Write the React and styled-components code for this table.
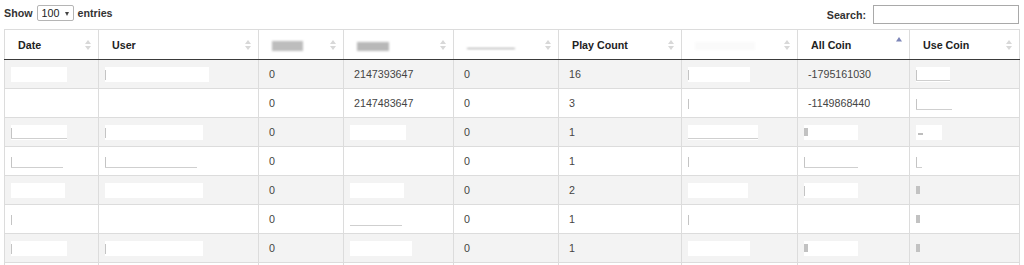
import React from "react";
import styled, { createGlobalStyle, css } from "styled-components";

const Global = createGlobalStyle`
  html, body { margin: 0; padding: 0; background: #fff; }
  body { font-family: "Liberation Sans", Arial, sans-serif; color: #333; overflow: hidden; }
`;

const Page = styled.div`
  padding: 0 5px 0 4px;
  width: 1015px;
`;

const TopBar = styled.div`
  display: flex;
  justify-content: space-between;
  align-items: flex-start;
  height: 29px;
`;

const Label = styled.label`
  display: flex;
  align-items: center;
  gap: 4px;
  font-size: 10.7px;
  font-weight: bold;
  color: #333;
`;

const LengthLabel = styled(Label)`
  margin-top: 5px;
`;

const SearchLabel = styled(Label)`
  margin-top: 5px;
  gap: 7px;
`;

const SelectWrap = styled.span`
  position: relative;
  display: inline-block;
  &::after {
    content: "";
    position: absolute;
    right: 5px;
    top: 7px;
    border-left: 2.5px solid transparent;
    border-right: 2.5px solid transparent;
    border-top: 4px solid #444;
    pointer-events: none;
  }
`;

const Select = styled.select`
  appearance: none;
  -webkit-appearance: none;
  font-family: inherit;
  font-size: 10.7px;
  color: #222;
  height: 16px;
  width: 37px;
  padding: 0 0 0 4px;
  border: 1px solid #b5b5b5;
  border-radius: 2px;
  background: #fff;
  outline: none;
`;

const SearchInput = styled.input`
  width: 146px;
  height: 19px;
  box-sizing: border-box;
  border: 1px solid #a9a9a9;
  padding: 0 4px;
  font-size: 11px;
  outline: none;
`;

const Table = styled.table`
  width: 1015px;
  table-layout: fixed;
  border-collapse: collapse;
  font-size: 10.7px;
`;

const Col = styled.col`
  width: ${(p) => p.$w}px;
`;

const Th = styled.th`
  position: relative;
  height: 30px;
  padding: 0 18px 0 13px;
  box-sizing: border-box;
  text-align: left;
  font-weight: bold;
  color: #222;
  border: 1px solid #dcdcdc;
  border-bottom: 1px solid #3a3a3a;
  white-space: nowrap;
  background: #fff;
`;

const SortIcon = styled.svg`
  position: absolute;
  right: 7px;
  top: 50%;
  transform: translateY(-50%);
`;

const Tr = styled.tr`
  background: ${(p) => (p.$odd ? "#f3f3f3" : "#fff")};
`;

const Td = styled.td`
  height: 29px;
  padding: 0 10px;
  box-sizing: border-box;
  border: 1px solid #dcdcdc;
  color: #444;
  white-space: nowrap;
  vertical-align: middle;
`;

const HeadBlur = styled.span`
  display: inline-block;
  vertical-align: middle;
  width: ${(p) => p.$w}px;
  height: ${(p) => p.$h}px;
  background: ${(p) => p.$c};
  filter: blur(0.8px);
  margin-top: ${(p) => p.$mt || 0}px;
`;

const Redact = styled.span`
  position: relative;
  display: inline-block;
  vertical-align: middle;
  margin-left: -4px;
  width: ${(p) => p.$w}px;
  height: 15px;
  background: ${(p) => (p.$box ? "#fff" : "transparent")};
  filter: blur(0.5px);
  ${(p) =>
    p.$tick &&
    css`
      &::before {
        content: "";
        position: absolute;
        left: 0;
        top: 3px;
        width: 1px;
        height: 10px;
        background: #c4c4c4;
      }
    `}
  ${(p) =>
    p.$under &&
    css`
      &::after {
        content: "";
        position: absolute;
        left: 0;
        right: 0;
        bottom: 1px;
        height: 1px;
        background: #cfcfcf;
      }
    `}
  ${(p) =>
    p.$dot &&
    css`
      &::before {
        content: "";
        position: absolute;
        left: 0;
        top: 3px;
        width: 4px;
        height: 8px;
        background: #c2c2c2;
      }
    `}
  ${(p) =>
    p.$dash &&
    css`
      &::after {
        content: "";
        position: absolute;
        left: 2px;
        top: 8px;
        width: 5px;
        height: 2px;
        background: #bdbdbd;
      }
    `}
`;

const widths = [94, 160, 85, 110, 105, 123, 116, 112, 110];

const BothArrows = () => (
  <SortIcon width="6" height="10" viewBox="0 0 6 10">
    <path d="M3 0 L6 4 L0 4 Z" fill="#d8d8d8" />
    <path d="M3 10 L6 6 L0 6 Z" fill="#d8d8d8" />
  </SortIcon>
);

const AscArrow = () => (
  <SortIcon width="6" height="10" viewBox="0 0 6 10" style={{ marginTop: -3 }}>
    <path d="M3 0 L6 4.5 L0 4.5 Z" fill="#7d86b8" />
  </SortIcon>
);

const headers = [
  { label: "Date" },
  { label: "User" },
  { blur: { w: 31, h: 10, c: "#bdbdbd" } },
  { blur: { w: 32, h: 9, c: "#b8b8b8", mt: 2 } },
  { blur: { w: 48, h: 1.5, c: "#9a9a9a", mt: 6 } },
  { label: "Play Count" },
  { blur: { w: 60, h: 8, c: "#fafafa" } },
  { label: "All Coin", asc: true },
  { label: "Use Coin" },
];

const rows = [
  [{ w: 56, box: 1 }, { w: 104, box: 1, tick: 1 }, "0", "2147393647", "0", "16", { w: 62, box: 1, tick: 1 }, "-1795161030", { w: 34, box: 1, tick: 1, under: 1 }],
  [{ w: 50 }, null, "0", "2147483647", "0", "3", { w: 62, tick: 1 }, "-1149868440", { w: 36, tick: 1, under: 1 }],
  [{ w: 56, box: 1, tick: 1, under: 1 }, { w: 98, box: 1, tick: 1 }, "0", { w: 56, box: 1 }, "0", "1", { w: 70, box: 1, under: 1 }, { w: 54, box: 1, dot: 1 }, { w: 26, box: 1, dash: 1 }],
  [{ w: 52, tick: 1, under: 1 }, { w: 92, tick: 1, under: 1 }, "0", null, "0", "1", { w: 60, tick: 1 }, { w: 54, tick: 1, under: 1 }, { w: 6, tick: 1, under: 1 }],
  [{ w: 54, box: 1 }, { w: 98, box: 1 }, "0", { w: 54, box: 1 }, "0", "2", { w: 60, box: 1 }, { w: 54, box: 1, tick: 1 }, { w: 5, dot: 1 }],
  [{ w: 50, tick: 1 }, { w: 92 }, "0", { w: 52, under: 1 }, "0", "1", { w: 60, tick: 1 }, { w: 54, box: 1 }, { w: 5, dot: 1 }],
  [{ w: 56, box: 1, tick: 1 }, { w: 98, box: 1, tick: 1 }, "0", { w: 62, box: 1 }, "0", "1", { w: 62, box: 1 }, { w: 54, box: 1, dot: 1 }, { w: 5, dot: 1 }],
  [null, null, null, null, null, null, null, null, null],
];

const Cell = ({ v }) => {
  if (v == null) return <Td />;
  if (typeof v === "string") return <Td>{v}</Td>;
  return (
    <Td>
      <Redact $w={v.w} $box={v.box} $tick={v.tick} $under={v.under} $dot={v.dot} $dash={v.dash} />
    </Td>
  );
};

export default function App() {
  return (
    <Page>
      <Global />
      <TopBar>
        <LengthLabel>
          Show
          <SelectWrap>
            <Select defaultValue="100">
              <option value="10">10</option>
              <option value="25">25</option>
              <option value="50">50</option>
              <option value="100">100</option>
            </Select>
          </SelectWrap>
          entries
        </LengthLabel>
        <SearchLabel>
          Search:
          <SearchInput type="text" />
        </SearchLabel>
      </TopBar>
      <Table>
        <colgroup>
          {widths.map((w, i) => (
            <Col key={i} $w={w} />
          ))}
        </colgroup>
        <thead>
          <tr>
            {headers.map((h, i) => (
              <Th key={i}>
                {h.label}
                {h.blur && <HeadBlur $w={h.blur.w} $h={h.blur.h} $c={h.blur.c} $mt={h.blur.mt} />}
                {h.asc ? <AscArrow /> : <BothArrows />}
              </Th>
            ))}
          </tr>
        </thead>
        <tbody>
          {rows.map((r, i) => (
            <Tr key={i} $odd={i % 2 === 0}>
              {r.map((c, j) => (
                <Cell key={j} v={c} />
              ))}
            </Tr>
          ))}
        </tbody>
      </Table>
    </Page>
  );
}
